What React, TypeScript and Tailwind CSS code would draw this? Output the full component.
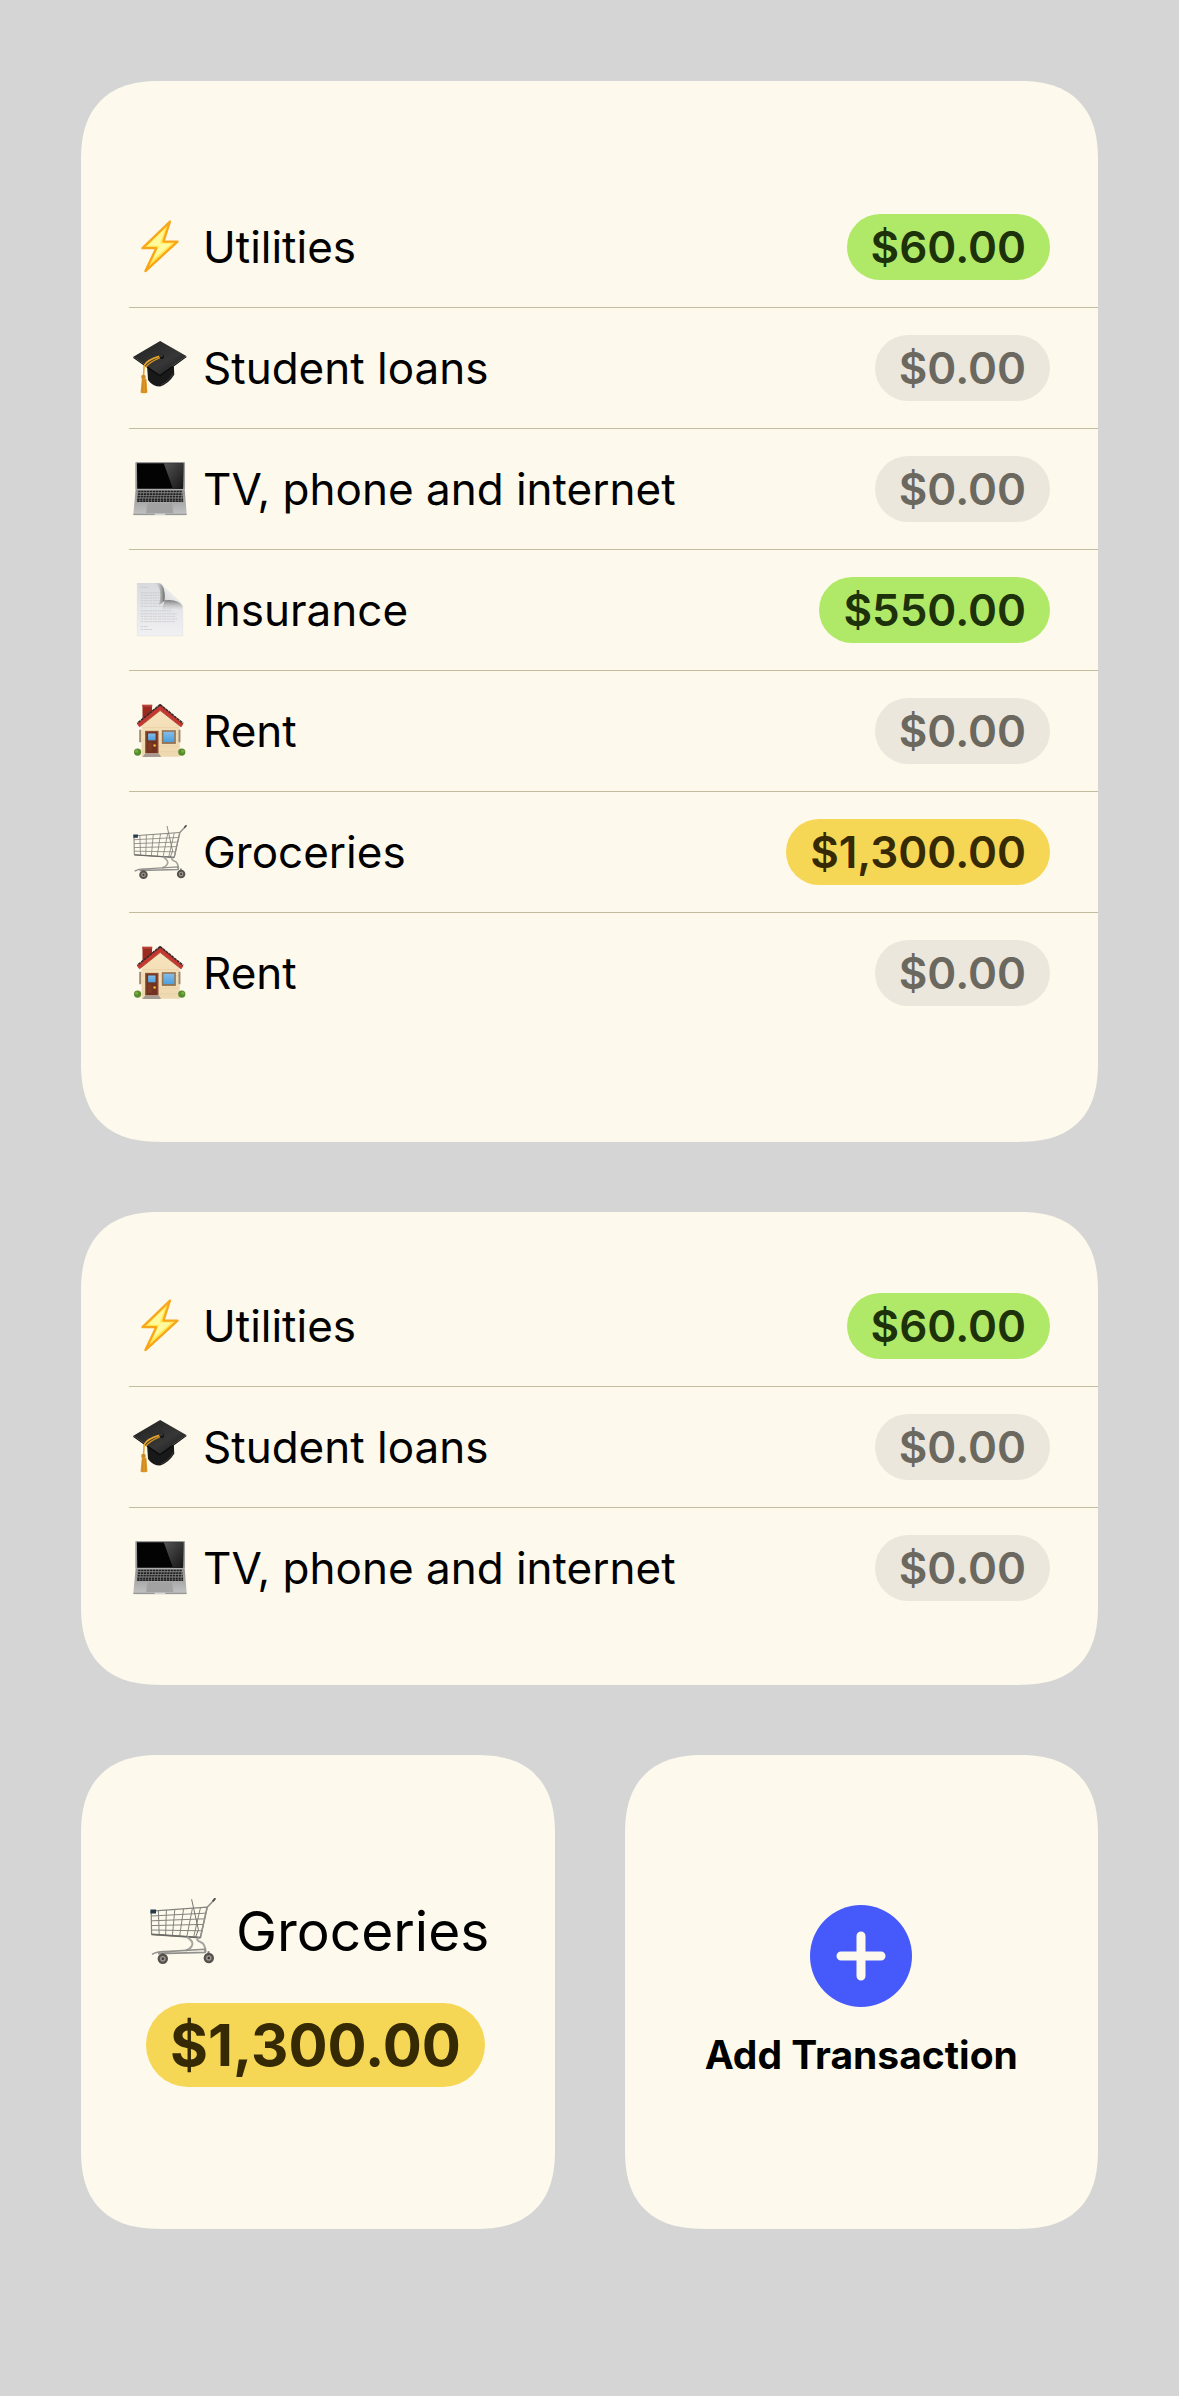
import type { ReactNode } from "react";

type IconName = "bolt" | "cap" | "laptop" | "page" | "house" | "cart";
type Tone = "green" | "yellow" | "muted";

interface Category {
  icon: IconName;
  name: string;
  amount: string;
  tone: Tone;
}

const categories: Category[] = [
  { icon: "bolt", name: "Utilities", amount: "$60.00", tone: "green" },
  { icon: "cap", name: "Student loans", amount: "$0.00", tone: "muted" },
  { icon: "laptop", name: "TV, phone and internet", amount: "$0.00", tone: "muted" },
  { icon: "page", name: "Insurance", amount: "$550.00", tone: "green" },
  { icon: "house", name: "Rent", amount: "$0.00", tone: "muted" },
  { icon: "cart", name: "Groceries", amount: "$1,300.00", tone: "yellow" },
  { icon: "house", name: "Rent", amount: "$0.00", tone: "muted" },
];

const tones: Record<Tone, string> = {
  green: "bg-[#b0e967] text-[#1d310b]",
  yellow: "bg-[#f6d655] text-[#352a04]",
  muted: "bg-[#ebe7dc] text-[#6b6860]",
};

const drawings: Record<IconName, ReactNode> = {
  bolt: (
    <>
      <defs>
        <linearGradient id="bolt-edge" x1="0" y1="0" x2="0" y2="1">
          <stop offset="0" stopColor="#f7a823" />
          <stop offset="1" stopColor="#fba414" />
        </linearGradient>
      </defs>
      <path
        d="M112 5 L28 86 L70 86 L37 156 L135 66 L92 66 Z"
        fill="#ffe94e"
        stroke="url(#bolt-edge)"
        strokeWidth="7"
        strokeLinejoin="round"
      />
      <path d="M97 27 L44 79 L79 79 L59 122 L117 72 L81 72 Z" fill="#fff9a0" />
    </>
  ),
  cap: (
    <>
      <defs>
        <linearGradient id="cap-top" x1="0" y1="0" x2="1" y2="1">
          <stop offset="0" stopColor="#202020" />
          <stop offset="0.6" stopColor="#373737" />
          <stop offset="1" stopColor="#151515" />
        </linearGradient>
      </defs>
      <path d="M42 78 L45 119 Q59 139 82 139 Q108 130 125 103 L124 77 Z" fill="#191919" />
      <path d="M85 134 Q109 124 122 99" fill="none" stroke="#4a4a4a" strokeWidth="2" />
      <path d="M0 48 L82 0 L162 46 L81 104 Z" fill="url(#cap-top)" />
      <path d="M0 48 L81 104 L162 46 L162 50 L81 109 L0 52 Z" fill="#0c0c0c" />
      <ellipse cx="83" cy="47" rx="11" ry="8" fill="#111" />
      <ellipse cx="83" cy="44" rx="9" ry="5" fill="#333" />
      <path d="M79 47 Q42 58 33 75 L31 112" fill="none" stroke="#e6a62f" strokeWidth="5" />
      <path d="M82 51 Q49 65 38 80" fill="none" stroke="#d8931f" strokeWidth="4" />
      <circle cx="31" cy="110" r="7" fill="#c98a28" />
      <path d="M26 115 L22 157 Q32 163 43 157 L40 115 Z" fill="#dc9727" />
      <path d="M30 118 L28 158 M36 118 L38 158" stroke="#c47c1b" strokeWidth="2" />
    </>
  ),
  laptop: (
    <>
      <defs>
        <linearGradient id="laptop-body" x1="0" y1="0" x2="0" y2="1">
          <stop offset="0" stopColor="#8e8e8e" />
          <stop offset="1" stopColor="#c4c4c4" />
        </linearGradient>
        <linearGradient id="laptop-glare" x1="0" y1="0" x2="1" y2="1">
          <stop offset="0" stopColor="#555" />
          <stop offset="1" stopColor="#151515" />
        </linearGradient>
      </defs>
      <path d="M9 0 H155 Q158 0 158 3 V84 H6 V3 Q6 0 9 0 Z" fill="#9c9c9c" />
      <path d="M11 4 H153 L152 82 H12 Z" fill="#030303" />
      <path d="M93 4 H153 L152 82 H121 Z" fill="url(#laptop-glare)" />
      <path d="M7 84 H157 L163 159 Q163 163 158 163 H5 Q0 163 0 159 Z" fill="url(#laptop-body)" />
      <path d="M14 86 H149 L153 122 H10 Z" fill="#858585" />
      <path
        d="M15 90 H149 M14 98 H150 M13 106 H151 M12 114 H152 M12 120 H152"
        stroke="#202020"
        strokeWidth="5"
        strokeDasharray="7 2"
      />
      <path d="M43 125 H119 L122 156 H39 Z" fill="#a2a2a2" stroke="#b2b2b2" />
      <path d="M0 160 H163" stroke="#999" strokeWidth="4" />
      <path d="M65 160 H98" stroke="#d7d7d7" strokeWidth="4" />
    </>
  ),
  page: (
    <>
      <defs>
        <linearGradient id="page-paper" x1="0" y1="0" x2="0" y2="1">
          <stop offset="0" stopColor="#d9dadd" />
          <stop offset="1" stopColor="#f1f1f3" />
        </linearGradient>
        <linearGradient id="page-fold" x1="1" y1="0" x2="0" y2="1">
          <stop offset="0.3" stopColor="#f8f8f8" />
          <stop offset="0.8" stopColor="#d2d2d2" />
          <stop offset="1" stopColor="#a9a9a9" />
        </linearGradient>
        <linearGradient id="page-shade" x1="0" y1="0" x2="0" y2="1">
          <stop offset="0" stopColor="#747474" />
          <stop offset="1" stopColor="#dadada" stopOpacity="0" />
        </linearGradient>
        <linearGradient id="page-side" x1="1" y1="0" x2="0" y2="0">
          <stop offset="0" stopColor="#666" />
          <stop offset="1" stopColor="#ddd" stopOpacity="0" />
        </linearGradient>
      </defs>
      <path d="M12 0 H77 Q100 1 96 53 Q143 46 151 72 V162 H12 Z" fill="url(#page-paper)" stroke="#d4d4d6" />
      <path
        d="M23 13 H46 M23 30 H86 M23 38 H84 M23 46 H88 M23 54 H86 M23 62 H90 M23 71 H98 M23 85 H119 M23 94 H132 M23 102 H128 M23 110 H134 M23 118 H127 M23 133 H45 M23 142 H57"
        stroke="#c1c2c5"
        strokeWidth="2"
        strokeDasharray="7 2 4 1"
      />
      <path d="M62 0 H77 Q99 5 96 54 L78 68 Q92 11 62 0 Z" fill="url(#page-side)" />
      <path d="M96 52 Q142 45 151 72 L147 84 Q128 72 86 88 Z" fill="url(#page-shade)" />
      <path d="M75 0 Q88 2 94 11 L142 55 Q149 61 151 72 Q139 48 96 53 Q100 2 75 0 Z" fill="url(#page-fold)" />
    </>
  ),
  house: (
    <>
      <defs>
        <linearGradient id="house-wall" x1="0" y1="0" x2="0" y2="1">
          <stop offset="0" stopColor="#f8e4bd" />
          <stop offset="1" stopColor="#eed8b0" />
        </linearGradient>
        <linearGradient id="house-glass" x1="0" y1="0" x2="0" y2="1">
          <stop offset="0" stopColor="#83bce8" />
          <stop offset="1" stopColor="#4ca0df" />
        </linearGradient>
      </defs>
      <path d="M28 3 H57 V31 L28 53 Z" fill="#9d2a21" />
      <path d="M27 2 H58 V8 H27 Z" fill="#b9443b" />
      <path d="M25 55 L82 13 L142 60 V161 H25 Z" fill="url(#house-wall)" />
      <path d="M27 72 H140 M27 91 H140 M27 110 H140 M27 129 H140 M27 146 H140" stroke="#e6d0a3" strokeWidth="2" />
      <path d="M18 79 H24 V117 H18 Z M138 79 H144 V117 H138 Z" fill="#a08a70" />
      <circle cx="13" cy="147" r="11" fill="#568c2c" />
      <circle cx="148" cy="147" r="11" fill="#568c2c" />
      <circle cx="10" cy="144" r="5" fill="#78a943" />
      <circle cx="151" cy="144" r="5" fill="#78a943" />
      <path d="M36 82 H77 V151 H36 Z" fill="#8f5036" />
      <path d="M40 86 H73 V150 H40 Z" fill="#713320" />
      <path d="M45 90 H68 V111 H45 Z" fill="url(#house-glass)" />
      <path d="M45 118 H56 V143 H45 Z" fill="#7f3b25" />
      <circle cx="65" cy="127" r="4" fill="#edb631" />
      <path d="M87 80 H130 V122 H87 Z" fill="#957557" />
      <path d="M92 85 H125 V116 H92 Z" fill="url(#house-glass)" />
      <path d="M36 151 H78 L85 162 H28 Z" fill="#a69b90" />
      <path d="M82 1 L153 60 L147 70 L82 19 L18 70 L11 60 Z" fill="#c73730" />
      <path d="M82 2 L152 59 M82 2 L12 59" stroke="#342b2b" strokeWidth="5" strokeDasharray="9 2" />
      <path d="M19 70 L82 20 L146 70" fill="none" stroke="#942219" strokeWidth="2" />
    </>
  ),
  cart: (
    <>
      <g fill="none" stroke="#85837e" strokeWidth="3" strokeLinejoin="round">
        <path d="M2 33 L142 23 L125 99 L3 91 Z" />
        <path d="M2 45 L138 38 M2 57 L136 52 M2 69 L133 66 M3 80 L129 82" strokeWidth="2.5" />
        <path d="M20 32 L22 92 M40 30 L38 94 M61 29 L55 95 M83 27 L73 96 M105 26 L91 97 M125 25 L108 98" strokeWidth="2.5" />
        <path d="M103 3 L120 79 L113 98" stroke="#777571" strokeWidth="2.5" />
        <path d="M125 99 L142 23 L161 3" stroke="#918f8b" strokeWidth="4" />
      </g>
      <path d="M3 91 L125 99" stroke="#6b6a67" strokeWidth="4" />
      <path
        d="M91 97 Q111 110 103 121 Q97 130 88 131 M122 99 Q111 104 125 110 Q137 113 138 135"
        fill="none"
        stroke="#a5a39f"
        strokeWidth="5"
      />
      <path d="M4 141 Q17 133 38 134 L137 128 L137 136 L19 139" fill="none" stroke="#92908c" strokeWidth="4" strokeLinejoin="round" />
      <path d="M31 137 V146 M146 133 L143 145" stroke="#777" strokeWidth="5" />
      <path d="M0 29 H14 V39 H0 Z" fill="#253a4a" />
      <circle cx="31" cy="152" r="13" fill="#56534f" />
      <circle cx="146" cy="150" r="13" fill="#56534f" />
      <circle cx="31" cy="152" r="7" fill="#9a958f" />
      <circle cx="146" cy="150" r="7" fill="#9a958f" />
      <circle cx="31" cy="152" r="3" fill="#393735" />
      <circle cx="146" cy="150" r="3" fill="#393735" />
      <path d="M161 2 L157 7" stroke="#555" strokeWidth="5" strokeLinecap="round" />
    </>
  ),
};

function CategoryIcon({ name, className }: { name: IconName; className: string }) {
  return (
    <svg viewBox="0 0 163 165" className={className} aria-hidden="true">
      {drawings[name]}
    </svg>
  );
}

function Card({ className = "", children }: { className?: string; children: ReactNode }) {
  return (
    <section
      className={`overflow-hidden rounded-[80px] bg-[#fdf9ec] [corner-shape:superellipse(1.3)] ${className}`}
    >
      {children}
    </section>
  );
}

function CategoryList({ items }: { items: Category[] }) {
  return (
    <ul className="ml-12 divide-y divide-[#c3bc9f]">
      {items.map((item, index) => (
        <li key={index} className="flex h-[121px] items-center justify-between pr-12 last:h-[120px]">
          <div className="flex items-center gap-3">
            <span className="flex w-[62px] shrink-0 justify-center">
              <CategoryIcon name={item.icon} className="size-[54px]" />
            </span>
            <span className="text-[44px] leading-[56px]">{item.name}</span>
          </div>
          <span
            className={`rounded-full px-6 text-[44px] leading-[66px] font-semibold ${tones[item.tone]}`}
          >
            {item.amount}
          </span>
        </li>
      ))}
    </ul>
  );
}

export default function App() {
  const groceries = categories[5];

  return (
    <main className="flex min-h-screen flex-col gap-[70px] bg-[#d5d5d5] p-[81px] font-['Inter',sans-serif] text-black">
      <Card className="pt-[106px] pb-[109px]">
        <CategoryList items={categories} />
      </Card>

      <Card className="pt-[54px] pb-[57px]">
        <CategoryList items={categories.slice(0, 3)} />
      </Card>

      <div className="grid grid-cols-2 gap-[70px]">
        <Card className="flex aspect-square flex-col items-start justify-center gap-[38px] pl-[65px]">
          <div className="flex items-center gap-4">
            <span className="flex w-[74px] shrink-0 justify-center">
              <CategoryIcon name={groceries.icon} className="size-[66px]" />
            </span>
            <h2 className="text-[55px] leading-[68px]">{groceries.name}</h2>
          </div>
          <span
            className={`rounded-full px-6 text-[58px] leading-[84px] font-bold ${tones[groceries.tone]}`}
          >
            {groceries.amount}
          </span>
        </Card>

        <Card className="flex aspect-square">
          <button
            type="button"
            className="flex flex-1 cursor-pointer flex-col items-center justify-center gap-6"
          >
            <svg viewBox="0 0 102 102" className="size-[102px]" aria-hidden="true">
              <circle cx="51" cy="51" r="51" fill="#465afb" />
              <path d="M51 31 V71 M31 51 H71" stroke="#fdf9ec" strokeWidth="9" strokeLinecap="round" />
            </svg>
            <span className="text-[39px] leading-[48px] font-bold">Add Transaction</span>
          </button>
        </Card>
      </div>
    </main>
  );
}
